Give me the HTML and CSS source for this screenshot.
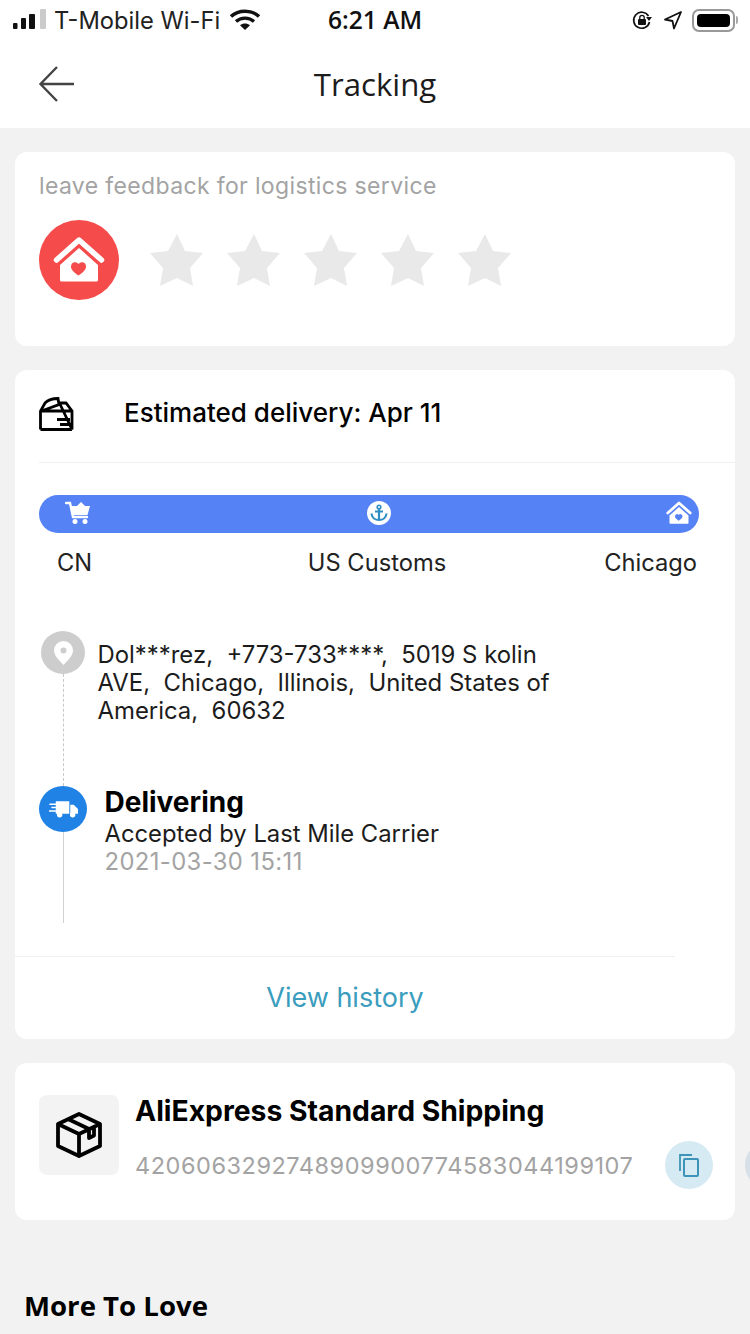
FILE: index.html
```html
<!DOCTYPE html>
<html lang="en">
<head>
<meta charset="utf-8">
<title>Tracking</title>
<link rel="stylesheet" href="styles.css">
</head>
<body>
<div class="page">
  <div class="top">
    <div class="status">
      <div class="status-left">
        <svg class="signal" width="34" height="24" viewBox="0 0 34 24"><rect x="1" y="15" width="4.500" height="6" rx="1" fill="#111"/><rect x="9" y="10" width="5" height="11" rx="1" fill="#111"/><rect x="17" y="6" width="6" height="15" rx="1" fill="#111"/><rect x="28" y="1" width="6" height="20" rx="1" fill="#cbcbcb"/></svg>
        <span class="carrier">T-Mobile Wi-Fi</span>
        <svg class="wifi" width="32" height="24" viewBox="0 0 32 24"><path d="M2 9.500C9.500 2.500 22.500 2.500 30 9.500" fill="none" stroke="#111" stroke-width="3.600"/><path d="M7 14.500C12 10 20 10 25 14.500" fill="none" stroke="#111" stroke-width="3.400"/><path d="M11 18.200C14 15.800 18 15.800 21 18.200L16 23Z" fill="#111"/></svg>
      </div>
      <span class="time">6:21 AM</span>
      <div class="status-right">
        <svg width="22" height="22" viewBox="0 0 22 22"><path d="M17.500 7A8 8 0 1 0 18.500 13" fill="none" stroke="#111" stroke-width="1.700"/><path d="M15 8h6l-3 4z" fill="#111"/><rect x="7" y="10" width="8" height="6" rx="1" fill="#111"/><path d="M8.800 10V8.500a2.200 2.200 0 0 1 4.400 0V10" fill="none" stroke="#111" stroke-width="1.300"/></svg>
        <svg class="arrow" width="20" height="20" viewBox="0 0 20 20"><path d="M18 2 2 9.500l7.500 1.500 1.500 7.500z" fill="none" stroke="#111" stroke-width="1.800" stroke-linejoin="round"/></svg>
        <span class="battery"><span class="battery-fill"></span></span>
        <span class="battery-cap"></span>
      </div>
    </div>
    <div class="nav">
      <svg class="back" width="38" height="38" viewBox="0 0 38 38"><path d="M36 19H3M19 2 2.500 19 19 36" fill="none" stroke="#444" stroke-width="2.400"/></svg>
      <h1 class="title">Tracking</h1>
    </div>
  </div>

  <main class="content">
    <section class="card feedback">
      <p class="feedback-label">leave feedback for logistics service</p>
      <div class="rating">
        <span class="house-badge">
          <svg width="52" height="46" viewBox="0 0 52 46"><path d="M3.500 23 26 3l22.500 20" fill="none" stroke="#fff" stroke-width="5.500" stroke-linecap="round" stroke-linejoin="round"/><path d="M7 28 26 11l19 17v15a1.500 1.500 0 0 1-1.500 1.500h-35A1.500 1.500 0 0 1 7 43z" fill="#fff"/><path d="M25.500 38.500c-7.500-5-7.500-7.500-7.500-9.500a4.100 4.100 0 0 1 7.500-2 4.100 4.100 0 0 1 7.500 2c0 2 0 4.500-7.500 9.500z" fill="#f64b4b"/></svg>
        </span>
        <div class="stars">
          <svg class="star" viewBox="0 0 53 52"><path d="M27 0l8 17 18 2-13 15 3 18-16-8-17 8 3-18L0 19l18-2z"/></svg>
          <svg class="star" viewBox="0 0 53 52"><path d="M27 0l8 17 18 2-13 15 3 18-16-8-17 8 3-18L0 19l18-2z"/></svg>
          <svg class="star" viewBox="0 0 53 52"><path d="M27 0l8 17 18 2-13 15 3 18-16-8-17 8 3-18L0 19l18-2z"/></svg>
          <svg class="star" viewBox="0 0 53 52"><path d="M27 0l8 17 18 2-13 15 3 18-16-8-17 8 3-18L0 19l18-2z"/></svg>
          <svg class="star" viewBox="0 0 53 52"><path d="M27 0l8 17 18 2-13 15 3 18-16-8-17 8 3-18L0 19l18-2z"/></svg>
        </div>
      </div>
    </section>

    <section class="card tracking">
      <div class="estimate">
        <svg width="35" height="34" viewBox="0 0 35 34"><path d="M1.500 32.500V14L6 6C9 3 14 1.500 19 1.500L20 7.500 2.500 14M20.500 6H27L33 14V32.500ZM1.500 14H33M1.500 32.500H33M18 22.500H31M21 27.500H31" fill="none" stroke="#000" stroke-width="2.800"/></svg>
        <span class="estimate-text">Estimated delivery: Apr 11</span>
      </div>
      <div class="progress">
        <div class="bar">
          <svg width="26" height="24" viewBox="0 0 26 24"><path d="M1 2h4l3 14h14" fill="none" stroke="#fff" stroke-width="2.400" stroke-linecap="round"/><path d="M6 5h19l-2.500 9H8z" fill="#fff"/><path d="M12 5l4-4 4 4z" fill="#fff"/><circle cx="10" cy="20.500" r="2.500" fill="#fff"/><circle cx="20" cy="20.500" r="2.500" fill="#fff"/></svg>
          <svg width="24" height="24" viewBox="0 0 24 24"><circle cx="12" cy="12" r="12" fill="#fff"/><circle cx="12" cy="6" r="1.800" fill="none" stroke="#2f8fc4" stroke-width="1.600"/><path d="M12 8v11M8 10.500h8M4.500 12.500c.5 4.500 4 6.500 7.500 6.500s7-2 7.500-6.500" fill="none" stroke="#2f8fc4" stroke-width="2.200"/></svg>
          <svg width="26" height="24" viewBox="0 0 52 46"><path d="M3.500 23 26 3l22.500 20" fill="none" stroke="#fff" stroke-width="5.500" stroke-linecap="round" stroke-linejoin="round"/><path d="M7 28 26 11l19 17v15a1.500 1.500 0 0 1-1.500 1.500h-35A1.500 1.500 0 0 1 7 43z" fill="#fff"/><path d="M25.500 38.500c-7.500-5-7.500-7.500-7.500-9.500a4.100 4.100 0 0 1 7.500-2 4.100 4.100 0 0 1 7.500 2c0 2 0 4.500-7.500 9.500z" fill="#5582f5"/></svg>
        </div>
        <div class="stops">
          <span>CN</span>
          <span>US Customs</span>
          <span class="stop-end">Chicago</span>
        </div>
      </div>

      <div class="timeline">
        <div class="address-row">
          <div class="rail">
            <span class="pin">
              <svg width="19" height="24" viewBox="0 0 19 24"><path fill-rule="evenodd" d="M9.500 0A9.500 9.500 0 0 1 19 9.500C19 15 13 20 9.500 24 6 20 0 15 0 9.500A9.500 9.500 0 0 1 9.500 0zm0 6.500a3 3 0 1 0 0 6 3 3 0 0 0 0-6z" fill="#fff"/></svg>
            </span>
            <span class="line-dotted"></span>
          </div>
          <p class="address">Dol***rez,&nbsp; +773-733****,&nbsp; 5019 S kolin AVE,&nbsp; Chicago,&nbsp; Illinois,&nbsp; United States of America,&nbsp; 60632</p>
        </div>
        <div class="event-row">
          <div class="rail">
            <span class="truck">
              <svg width="29" height="17" viewBox="0 0 30 17"><path d="M7 0h14v13H7zM22 3.500h3.500L30 8v5h-8z" fill="#fff"/><circle cx="11" cy="14" r="2.800" fill="#fff"/><circle cx="24.500" cy="14" r="2.800" fill="#fff"/><path d="M1 3h7M3 6.500h6M0 10h7" stroke="#fff" stroke-width="1.600" stroke-linecap="round"/></svg>
            </span>
            <span class="line-solid"></span>
          </div>
          <div class="event">
            <h2 class="event-title">Delivering</h2>
            <p class="event-text">Accepted by Last Mile Carrier</p>
            <p class="event-date">2021-03-30 15:11</p>
          </div>
        </div>
      </div>

      <div class="history">View history</div>
    </section>

    <section class="card shipping">
      <span class="box-tile">
        <svg width="48" height="46" viewBox="0 0 48 46"><path d="M24 2 45 12v22L24 44 3 34V12zM3 12l21 10 21-10M24 22v22M13 7l21 10v9l5-2.500V14.500" fill="none" stroke="#000" stroke-width="3.800" stroke-linejoin="round"/></svg>
      </span>
      <div class="ship-info">
        <h2 class="ship-name">AliExpress Standard Shipping</h2>
        <div class="ship-row">
          <span class="ship-number">4206063292748909900774583044199107</span>
          <span class="round-btn">
            <svg width="20" height="23" viewBox="0 0 20 23"><path d="M1 17V1h12" fill="none" stroke="#3d94b8" stroke-width="1.800"/><rect x="5" y="5" width="14" height="17" rx="1" fill="none" stroke="#3d94b8" stroke-width="2"/></svg>
          </span>
          <span class="round-btn round-btn-next"></span>
        </div>
      </div>
    </section>

    <h2 class="more">More To Love</h2>
  </main>
</div>
</body>
</html>
```

FILE: styles.css
```css
* { box-sizing: border-box; }
html, body { margin: 0; padding: 0; }
body { width: 750px; height: 1334px; overflow: hidden; background: #f2f2f2; font-family: Inter, "Liberation Sans", sans-serif; color: #111; }
h1, h2, p { margin: 0; font-weight: normal; }
.page { width: 750px; height: 1334px; overflow: hidden; }

.top { background: #fff; height: 128px; }
.status { position: relative; display: flex; justify-content: space-between; align-items: center; height: 40px; padding: 0 12px; }
.status-left { display: flex; align-items: center; }
.signal { margin-right: 8px; }
.carrier { font-size: 23.700px; color: #222; }
.wifi { margin-left: 9px; margin-top: -2px; }
.time { position: absolute; left: 328px; top: 5px; font-family: "Open Sans", sans-serif; font-weight: 600; font-size: 24.600px; line-height: 30px; color: #111; }
.status-right { display: flex; align-items: center; gap: 8px; }
.arrow { margin-left: 2px; }
.battery { width: 43px; height: 23px; border: 2px solid #999; border-radius: 7px; padding: 3px; display: block; margin-left: 1px; }
.battery-fill { display: block; height: 100%; width: 100%; background: #000; border-radius: 4px; }
.battery-cap { width: 2px; height: 8px; background: #aaa; margin-left: -7px; border-radius: 0 2px 2px 0; }

.nav { position: relative; display: flex; align-items: center; justify-content: center; height: 88px; }
.back { position: absolute; left: 38px; top: 25px; }
.title { font-family: "Open Sans", sans-serif; font-size: 31.200px; line-height: 44px; color: #1c1c1c; }

.content { padding: 24px 15px 0; display: flex; flex-direction: column; gap: 24px; }
.card { background: #fff; border-radius: 12px; }

.feedback { height: 194px; padding: 20px 24px; }
.feedback-label { font-size: 23px; line-height: 28px; color: #a3a3a3; letter-spacing: 0.360px; }
.rating { display: flex; align-items: center; margin-top: 20px; }
.house-badge { width: 80px; height: 80px; border-radius: 50%; background: #f64b4b; display: flex; align-items: center; justify-content: center; flex: none; }
.stars { display: flex; gap: 24px; margin-left: 31px; }
.star { width: 53px; height: 52px; fill: #e9e9e9; display: block; }

.tracking { height: 669px; padding-top: 20px; }
.estimate { display: flex; align-items: center; height: 73px; margin-left: 24px; padding-bottom: 27px; border-bottom: 1px solid #f0f0f0; }
.estimate svg { flex: none; position: relative; top: 1px; }
.estimate-text { font-size: 26px; font-weight: 500; line-height: 32px; margin-left: 50px; color: #000; }

.progress { margin: 32px 36px 0 24px; }
.bar { height: 38px; border-radius: 19px; background: #5582f5; display: flex; justify-content: space-between; align-items: center; padding: 0 7px 2px 26px; }
.stops { display: grid; grid-template-columns: 1fr auto 1fr; padding: 0 2px 0 18px; margin-top: 15px; font-size: 23.700px; line-height: 30px; color: #222; }
.stop-end { justify-self: end; }

.timeline { margin-top: 53px; padding-left: 24px; display: flex; flex-direction: column; }
.address-row { display: flex; align-items: flex-start; height: 155px; }
.rail { display: flex; flex-direction: column; align-items: center; flex: none; height: 100%; width: 48px; }
.pin { width: 44px; height: 43px; border-radius: 50%; background: #cdcdcd; display: flex; align-items: center; justify-content: center; flex: none; }
.line-dotted { flex: 1; width: 0; border-left: 1px dashed #c8c8c8; }
.address { width: 470px; margin-left: 10.500px; margin-top: 10px; font-size: 23.900px; line-height: 28px; color: #1c1c1c; }
.event-row { display: flex; align-items: flex-start; height: 137px; }
.truck { width: 48px; height: 46px; border-radius: 50%; background: #1f82e4; display: flex; align-items: center; justify-content: center; flex: none; }
.line-solid { flex: 1; width: 1px; background: #d0d0d0; }
.event { margin-left: 17.500px; margin-top: -2px; }
.event-title { font-size: 28px; font-weight: 700; line-height: 36px; color: #000; }
.event-text { font-size: 23.800px; line-height: 28px; color: #1c1c1c; }
.event-date { font-size: 23.800px; line-height: 28px; color: #a3a3a3; letter-spacing: 0.400px; }

.history { margin-top: 33px; margin-right: 60px; border-top: 1px solid #f0f0f0; height: 81px; display: flex; align-items: center; justify-content: center; padding-top: 1px; font-size: 27px; color: #3a9dbd; }

.shipping { height: 157px; padding: 32px 24px; display: flex; align-items: flex-start; }
.box-tile { width: 80px; height: 80px; border-radius: 8px; background: #f3f3f3; display: flex; align-items: center; justify-content: center; flex: none; }
.ship-info { margin-left: 16px; margin-top: -1px; }
.ship-name { font-size: 28.300px; font-weight: 700; line-height: 36px; white-space: nowrap; color: #000; margin-top: -1px; }
.ship-row { display: flex; align-items: center; margin-top: 12px; }
.ship-number { font-size: 23.500px; letter-spacing: 0.530px; color: #a3a3a3; white-space: nowrap; width: 530px; }
.round-btn { width: 48px; height: 48px; border-radius: 50%; background: #d6eaf3; display: flex; align-items: center; justify-content: center; flex: none; }
.round-btn-next { background: #d6e0e6; margin-left: 32px; }

.more { font-family: "Open Sans", sans-serif; font-size: 27.600px; font-weight: 700; line-height: 36px; color: #000; margin: 43px 0 0 9px; }
```
